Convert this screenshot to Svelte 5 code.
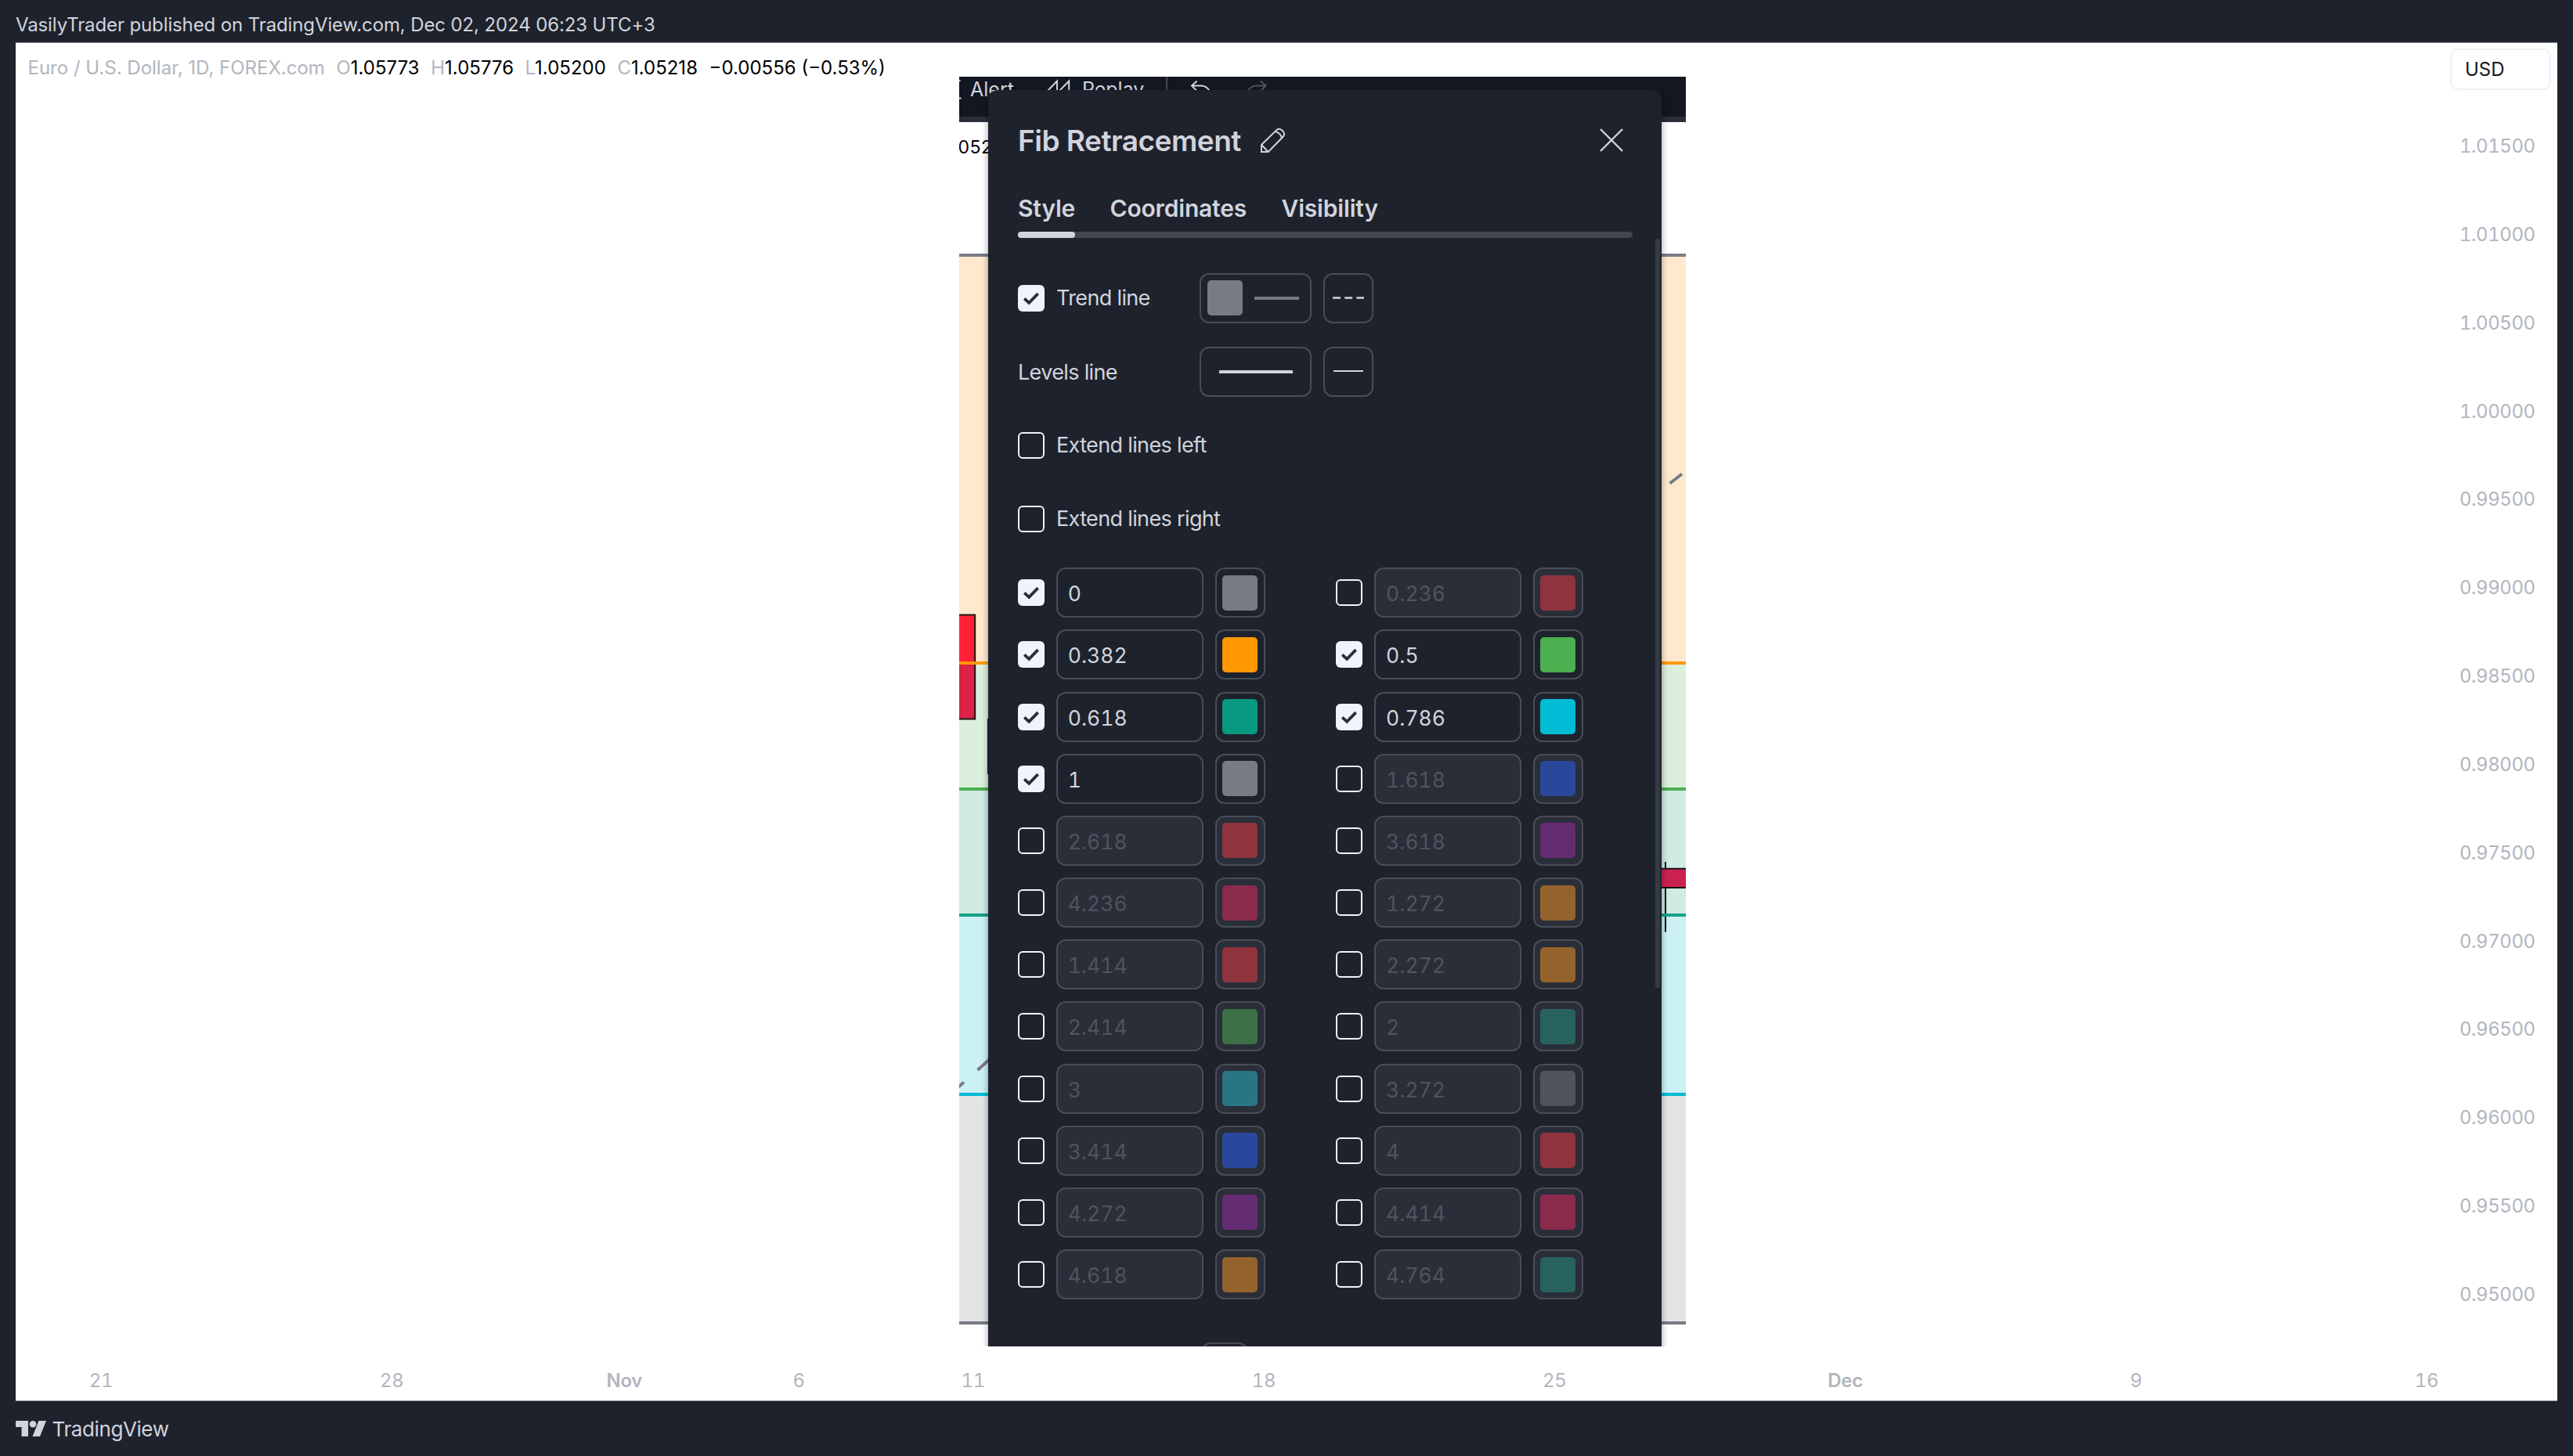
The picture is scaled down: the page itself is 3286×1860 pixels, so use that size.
<script lang="ts">

    type Level = { value: string; on: boolean; color: string };

    // LEGEND
    const ohlc = [
        { key: 'O', value: '1.05773' },
        { key: 'H', value: '1.05776' },
        { key: 'L', value: '1.05200' },
        { key: 'C', value: '1.05218' }
    ];

    // AXES
    const prices = Array.from({ length: 14 }, (_, i) => (1.015 - i * 0.005).toFixed(5));

    const dates = [
        { label: '21', bar: 1 },
        { label: '28', bar: 6 },
        { label: 'Nov', bar: 10, bold: true },
        { label: '6', bar: 13 },
        { label: '11', bar: 16 },
        { label: '18', bar: 21 },
        { label: '25', bar: 26 },
        { label: 'Dec', bar: 31, bold: true },
        { label: '9', bar: 36 },
        { label: '16', bar: 41 }
    ];

    // FIB LEVELS, left and right column in turn
    let levels: Level[] = $state([
        { value: '0', on: true, color: '#787b86' },
        { value: '0.236', on: false, color: '#8f343f' },
        { value: '0.382', on: true, color: '#ff9800' },
        { value: '0.5', on: true, color: '#4caf50' },
        { value: '0.618', on: true, color: '#089981' },
        { value: '0.786', on: true, color: '#00bcd4' },
        { value: '1', on: true, color: '#787b86' },
        { value: '1.618', on: false, color: '#2a489b' },
        { value: '2.618', on: false, color: '#8f343f' },
        { value: '3.618', on: false, color: '#652c74' },
        { value: '4.236', on: false, color: '#8a2b4e' },
        { value: '1.272', on: false, color: '#94632d' },
        { value: '1.414', on: false, color: '#8f343f' },
        { value: '2.272', on: false, color: '#94632d' },
        { value: '2.414', on: false, color: '#3d7046' },
        { value: '2', on: false, color: '#27635c' },
        { value: '3', on: false, color: '#297584' },
        { value: '3.272', on: false, color: '#51545f' },
        { value: '3.414', on: false, color: '#2a489b' },
        { value: '4', on: false, color: '#8f343f' },
        { value: '4.272', on: false, color: '#652c74' },
        { value: '4.414', on: false, color: '#8a2b4e' },
        { value: '4.618', on: false, color: '#94632d' },
        { value: '4.764', on: false, color: '#27635c' }
    ]);

    let trendLine = $state(true);
    let extendLeft = $state(false);
    let extendRight = $state(false);

</script>

{#snippet checkbox(on: boolean, toggle: () => void)}
    <button class="check" class:on onclick={toggle} aria-label="toggle">
        {#if on}
            <svg width="34" height="34" viewBox="0 0 34 34">
                <path d="M8.2 17.3 L14.2 22.8 L25.6 11.2" fill="none" stroke="#2a2e39" stroke-width="3.8" />
            </svg>
        {/if}
    </button>
{/snippet}

<div class="page">

    <header class="published">VasilyTrader published on TradingView.com, Dec 02, 2024 06:23 UTC+3</header>

    <main class="chart">

        <div class="legend">
            <span class="symbol">Euro / U.S. Dollar, 1D, FOREX.com</span>
            {#each ohlc as item}
                <span><i>{item.key}</i>{item.value}</span>
            {/each}
            <span>−0.00556 (−0.53%)</span>
        </div>

        <aside class="price-axis">
            <div class="currency">USD</div>
            <div class="prices">
                {#each prices as price}
                    <span>{price}</span>
                {/each}
            </div>
        </aside>

        <div class="time-axis">
            {#each dates as date}
                <span class:bold={date.bold} style="grid-column: {date.bar}">{date.label}</span>
            {/each}
        </div>

        <!-- SNAPSHOT OVER THE CHART -->
        <section class="snapshot">

            <svg class="backdrop" width="928" height="1623" viewBox="1225 98 928 1623">
                <rect x="1225" y="98" width="928" height="51" fill="#131722" />
                <rect x="1225" y="149" width="928" height="7" fill="#2a2e39" />

                <!-- zones -->
                <rect x="1225" y="326" width="928" height="521" fill="#ffe9ce" />
                <rect x="1225" y="847" width="928" height="161" fill="#dbefdc" />
                <rect x="1225" y="1008" width="928" height="161" fill="#d0eae4" />
                <rect x="1225" y="1169" width="928" height="229" fill="#cbf1f5" />
                <rect x="1225" y="1398" width="928" height="292" fill="#e3e4e6" />

                <!-- candles -->
                <rect x="1225" y="785" width="21" height="62" fill="#ff2137" />
                <rect x="1225" y="847" width="21" height="72" fill="#dc2247" />
                <path d="M1225 785.5 H1245.2 V918.5 H1225" fill="none" stroke="#1d1813" stroke-width="2" />
                <path d="M1262 918 V989" stroke="#131722" stroke-width="2" />
                <path d="M2127 1101 V1190.5" stroke="#0d1b1c" stroke-width="2" />
                <rect x="2100" y="1110" width="53" height="24" fill="#cc2050" />
                <path d="M2100 1109.8 H2153 M2100 1134 H2153" stroke="#1a1216" stroke-width="2" />

                <!-- level lines -->
                <path d="M1225 326 H2153 M1225 1690 H2153" stroke="#787b86" stroke-width="4" />
                <path d="M1225 847 H2153" stroke="#ff9800" stroke-width="4" />
                <path d="M1225 1008 H2153" stroke="#4caf50" stroke-width="4" />
                <path d="M1225 1169 H2153" stroke="#16a085" stroke-width="4" />
                <path d="M1225 1398 H2153" stroke="#00bcd4" stroke-width="4" />
                <path d="M2132.5 617.5 L2148 605.5 M1248.5 1367 L1264 1353 M1221 1391 L1231 1382.5" stroke="#787b86" stroke-width="4" />

                <!-- toolbar icons -->
                <g fill="none" stroke="#d1d4dc" stroke-width="2">
                    <path d="M1225 103.5 L1226.5 102.5 M1225 125.5 H1227.5" />
                    <path d="M1337 117 L1350 103.5 V117 M1352 117 L1365.2 103.5 V117" />
                    <path d="M1528.5 103.5 L1522 109.5 L1528.5 116 M1522 109.5 H1535 Q1541 110 1544.5 116" />
                    <path d="M1610 103.5 L1616.5 109.5 L1610 116 M1616.5 109.5 H1603.5 Q1597.5 110 1594 116" stroke="#50535e" />
                    <path d="M1490 98 V117" stroke="#434651" />
                </g>
            </svg>

            <span class="tool alert">Alert</span>
            <span class="tool replay">Replay</span>
            <span class="cut-value">052</span>

            <div class="dialog">

                <div class="title">
                    <h1>Fib Retracement</h1>
                    <svg width="33" height="33" viewBox="0 0 33 33" fill="none" stroke="#d1d4dc" stroke-width="2">
                        <path d="M2 31 V22 L21.5 2.9 Q24.5 0.4 27.8 3 L29.8 5 Q32.4 8.3 29.8 11.5 L10.7 31 Z M2 22 L10.7 31 M19.5 5 Q26.5 6.5 28 13.5" />
                    </svg>
                    <svg class="close" width="32" height="32" viewBox="0 0 32 32" fill="none" stroke="#d1d4dc" stroke-width="2.4">
                        <path d="M2 2 L30 30 M30 2 L2 30" />
                    </svg>
                </div>

                <nav class="tabs">
                    <span class="active">Style</span>
                    <span class="coordinates">Coordinates</span>
                    <span class="visibility">Visibility</span>
                </nav>
                <div class="track"><div class="marker"></div></div>

                <div class="option">
                    {@render checkbox(trendLine, () => trendLine = !trendLine)}
                    <span class="label">Trend line</span>
                    <div class="pickers">
                        <div class="box wide">
                            <span class="swatch gray"></span>
                            <span class="stroke-sample"></span>
                        </div>
                        <div class="box">
                            <svg width="40" height="6" viewBox="0 0 40 6">
                                <path d="M0 2.5 H40" stroke="#d1d4dc" stroke-width="2.4" stroke-dasharray="10 5.2" />
                            </svg>
                        </div>
                    </div>
                </div>

                <div class="option levels-line">
                    <span class="label">Levels line</span>
                    <div class="pickers">
                        <div class="box wide centered"><span class="thick"></span></div>
                        <div class="box"><span class="thin"></span></div>
                    </div>
                </div>

                <div class="option extend">
                    {@render checkbox(extendLeft, () => extendLeft = !extendLeft)}
                    <span class="label">Extend lines left</span>
                </div>

                <div class="option extend">
                    {@render checkbox(extendRight, () => extendRight = !extendRight)}
                    <span class="label">Extend lines right</span>
                </div>

                <div class="levels">
                    {#each levels as level}
                        <div class="level" class:off={!level.on}>
                            {@render checkbox(level.on, () => level.on = !level.on)}
                            <div class="input">{level.value}</div>
                            <div class="box">
                                <span class="swatch" style="background: {level.color}"></span>
                            </div>
                        </div>
                    {/each}
                </div>

                <div class="next-box"></div>
                <div class="scrollbar"></div>

            </div>

        </section>

    </main>

    <footer class="brand">
        <svg width="39" height="20" viewBox="0 0 39 20" fill="#d1d4dc">
            <path d="M0 0 H16 V20 H7.6 V8 H0 Z" />
            <circle cx="22" cy="4.3" r="4.3" />
            <path d="M29.5 0 H39 L31 20 H21.5 Z" />
        </svg>
        <span>TradingView</span>
    </footer>

</div>

<style>

    :global(body) {
        background: #1e222d;
    }

    .page {
        display: flex;
        flex-direction: column;
        width: 3286px;
        height: 1860px;
        background: #1e222d;
        color: #d1d4dc;
        font-family: Inter, "Liberation Sans", sans-serif;
        font-size: 24px;
        overflow: hidden;
    }

    .published {
        height: 54px;
        padding: 0 20px;
        line-height: 64px;
        box-sizing: border-box;
        letter-spacing: -0.12px;
    }

    .chart {
        position: relative;
        display: grid;
        grid-template-columns: 1fr 137px;
        grid-template-rows: 1fr 52px;
        width: 3246px;
        height: 1736px;
        margin: 0 20px;
        box-sizing: border-box;
        background: #fff;
        border-top: 1px solid #8e9096;
        border-bottom: 1px solid #8e9096;
    }

    /* LEGEND */
    .legend {
        display: flex;
        gap: 14.6px;
        height: 30px;
        padding: 16px 15.5px;
        line-height: 31px;
        color: #000;
        white-space: nowrap;
    }

    .legend .symbol,
    .legend i {
        color: #b2b5be;
        font-style: normal;
    }

    /* AXES */
    .price-axis {
        color: #b2b5be;
    }

    .currency {
        width: 129px;
        height: 53px;
        margin-top: 6.5px;
        padding-left: 17px;
        box-sizing: border-box;
        border: 2px solid #f0f0f6;
        border-radius: 10px;
        line-height: 49px;
        color: #131722;
    }

    .prices {
        display: flex;
        flex-direction: column;
        margin-top: 16.5px;
        padding-left: 12px;
        font-variant-numeric: tabular-nums;
        letter-spacing: -0.45px;
    }

    .prices span {
        height: 112.85px;
        line-height: 112.85px;
    }

    .time-axis {
        grid-column: 1 / 3;
        display: grid;
        grid-template-columns: repeat(41, 74.26px);
        justify-items: center;
        align-items: center;
        padding-left: 72px;
        color: #b2b5be;
        font-variant-numeric: tabular-nums;
        letter-spacing: -0.3px;
    }

    .time-axis span {
        grid-row: 1;
    }

    .time-axis .bold {
        font-weight: 600;
    }

    /* SNAPSHOT */
    .snapshot {
        position: absolute;
        left: 1205px;
        top: 43px;
        width: 927.5px;
        height: 1622px;
        overflow: hidden;
    }

    .backdrop {
        display: block;
    }

    .tool,
    .cut-value {
        position: absolute;
        top: 1px;
        line-height: 30px;
        font-size: 25px;
    }

    .alert {
        left: 14px;
    }

    .replay {
        left: 157px;
    }

    .cut-value {
        left: -1.5px;
        top: 75px;
        font-size: 23px;
        color: #000;
        letter-spacing: 0.5px;
    }

    .dialog {
        position: absolute;
        left: 37px;
        top: 17px;
        width: 860px;
        height: 1640px;
        padding: 0 38px;
        box-sizing: border-box;
        background: #1e222d;
        border-radius: 12px 12px 0 0;
        box-shadow: 0 4px 8px rgba(0, 0, 0, 0.4);
    }

    .title {
        display: flex;
        align-items: center;
        height: 128px;
    }

    h1 {
        width: 309px;
        margin: 0;
        font-size: 37px;
        font-weight: 600;
        letter-spacing: -0.5px;
        white-space: nowrap;
    }

    .close {
        margin-left: auto;
        margin-right: 10px;
    }

    .tabs {
        display: flex;
        gap: 45px;
        height: 53px;
        line-height: 47px;
        font-size: 30px;
        font-weight: 600;
        letter-spacing: -0.18px;
        white-space: nowrap;
    }

    .tabs .active {
        width: 72.5px;
    }

    .coordinates {
        width: 174px;
    }

    .track {
        width: 785px;
        height: 8px;
        border-radius: 4px;
        background: #434651;
    }

    .marker {
        width: 72.5px;
        height: 8px;
        border-radius: 4px;
        background: #d1d4dc;
    }

    /* OPTIONS */
    .option {
        display: flex;
        align-items: center;
        gap: 15px;
        height: 64px;
        margin-top: 44.5px;
        font-size: 27px;
        letter-spacing: -0.65px;
    }

    .levels-line {
        margin-top: 30.5px;
    }

    .extend {
        margin-top: 29.8px;
    }

    .label {
        white-space: nowrap;
    }

    .pickers {
        display: flex;
        gap: 15px;
        margin-left: auto;
        margin-right: 330px;
    }

    .box {
        display: flex;
        align-items: center;
        justify-content: center;
        width: 64px;
        height: 64px;
        box-sizing: border-box;
        border: 2px solid #4a4c57;
        border-radius: 12px;
    }

    .wide {
        width: 143px;
        gap: 15px;
        justify-content: flex-start;
        padding-left: 7.5px;
    }

    .centered {
        justify-content: center;
        padding: 0;
    }

    .swatch {
        width: 45px;
        height: 45px;
        border-radius: 5px;
    }

    .gray {
        background: #787b86;
    }

    .stroke-sample {
        width: 57px;
        height: 4px;
        background: #787b86;
    }

    .thick {
        width: 94px;
        height: 4px;
        background: #d1d4dc;
    }

    .thin {
        width: 38px;
        height: 2px;
        margin-bottom: 2px;
        background: #d1d4dc;
    }

    .check {
        flex: none;
        width: 34px;
        height: 34px;
        padding: 0;
        border: 2px solid #f0f3fa;
        border-radius: 6px;
        background: none;
    }

    .check.on {
        border: none;
        background: #f0f3fa;
    }

    .check svg {
        display: block;
    }

    /* LEVELS */
    .levels {
        display: grid;
        grid-template-columns: 316px 316px;
        grid-auto-rows: 64px;
        column-gap: 90.3px;
        row-gap: 15.18px;
        margin-top: 30.6px;
    }

    .level {
        display: flex;
        align-items: center;
    }

    .input {
        width: 188px;
        height: 64px;
        margin: 0 14.8px;
        padding-left: 13px;
        box-sizing: border-box;
        border: 2px solid #4a4c57;
        border-radius: 12px;
        line-height: 62px;
        font-size: 26.5px;
        font-variant-numeric: tabular-nums;
    }

    .off .input,
    .off .box {
        background: #2a2e39;
        border-color: #4a4c57;
    }

    .off .input {
        color: #50535e;
    }

    .next-box {
        width: 60px;
        height: 64px;
        margin: 54.5px 0 0 234px;
        box-sizing: border-box;
        border: 2px solid #4a4c57;
        border-radius: 12px;
    }

    .scrollbar {
        position: absolute;
        right: 2px;
        top: 190px;
        width: 6px;
        height: 957px;
        border-radius: 3px;
        background: #363a45;
    }

    /* FOOTER */
    .brand {
        display: flex;
        align-items: center;
        gap: 7.5px;
        height: 70px;
        padding: 0 20px;
        font-size: 26px;
        letter-spacing: -0.4px;
    }

</style>
